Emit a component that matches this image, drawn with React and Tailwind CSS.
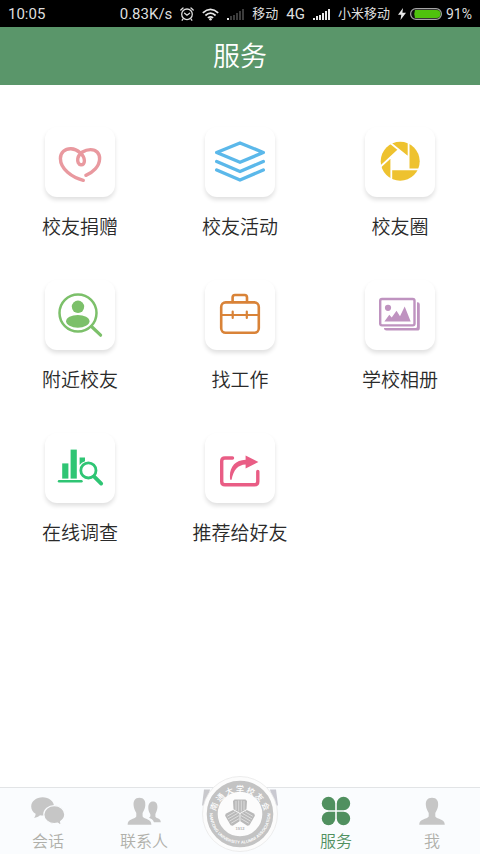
import { useState } from 'react'

// Service icons, drawn on a 70x70 tile
function HeartIcon() {
  return (
    <svg viewBox="0 0 70 70" className="w-full" fill="none" stroke="#e9999f" strokeWidth="3.4" strokeLinecap="round" aria-hidden="true">
      <path d="M38.3 53.3C27 50.5 15.4 42 15.4 31.5C15.4 25.5 20 21.6 26 21.8C32.5 22 39.4 28 39.4 33.8C39.4 36.4 38.1 37.9 36 37.8C33.4 37.6 32.3 34.8 32.8 31.5C33.8 26 40 22.6 45.5 22.6C51.5 22.6 54.8 26.5 54.6 32C54.3 39.5 48 45.5 40.9 48.3" />
    </svg>
  )
}

function LayersIcon() {
  return (
    <svg viewBox="0 0 70 70" className="w-full" fill="none" stroke="#5bb8ea" strokeWidth="3.4" strokeLinecap="round" strokeLinejoin="round" aria-hidden="true">
      <path d="M35 16L58.3 25.5L35 35.3L11.7 25.5Z" />
      <path d="M11.7 34.5L35 44.5L58.3 34.5" />
      <path d="M11.7 43L35 53L58.3 43" />
    </svg>
  )
}

function ApertureIcon() {
  return (
    <svg viewBox="0 0 70 70" className="w-full" aria-hidden="true">
      <circle cx="35.2" cy="34.3" r="19.5" fill="#eec22f" />
      <path d="M33.5 23L43.8 30V42.3H26.3V29.8Z" fill="#fff" />
      <path d="M26 16.5L44 31M43.6 13V42.5M26 42.3H57M26.3 31V56M33.5 23L14 41" fill="none" stroke="#fff" strokeWidth="1.8" />
    </svg>
  )
}

function NearbyIcon() {
  return (
    <svg viewBox="0 0 70 70" className="w-full" fill="#7cc06a" aria-hidden="true">
      <circle cx="33" cy="33" r="18.5" fill="none" stroke="#7cc06a" strokeWidth="2.5" />
      <circle cx="33" cy="26.8" r="6.2" />
      <ellipse cx="32.8" cy="41.3" rx="11.7" ry="6.4" />
      <path d="M46.5 46.5L55.6 55.2" stroke="#7cc06a" strokeWidth="3.2" strokeLinecap="round" />
    </svg>
  )
}

function BriefcaseIcon() {
  return (
    <svg viewBox="0 0 70 70" className="w-full" fill="none" stroke="#d98338" strokeWidth="2.6" strokeLinecap="round" aria-hidden="true">
      <rect x="16.2" y="22.4" width="37.6" height="30.4" rx="4.5" />
      <path d="M27.6 22V17.5Q27.6 15 30 15H39.6Q42 15 42 17.5V22" />
      <path d="M16.5 35H53.5" strokeWidth="2.2" />
      <path d="M27.7 31.5V38M41.8 31.5V38" strokeWidth="2.2" />
    </svg>
  )
}

function GalleryIcon() {
  return (
    <svg viewBox="0 0 70 70" className="w-full" fill="#bf93c0" aria-hidden="true">
      <rect x="15.2" y="19" width="34.3" height="26.4" rx="1.8" fill="none" stroke="#bf93c0" strokeWidth="2.4" />
      <path d="M52 22.3H52.5Q54.8 22.3 54.8 24.5V48Q54.8 50.6 52.3 50.6H21.5Q19 50.6 19 48.5V48H50.5Q52 48 52 46.5Z" />
      <circle cx="23" cy="27.8" r="3.1" />
      <path d="M19.4 41.6L24.3 34.8L26.7 37.5L31.5 30.7L35 36.2L39.7 26.4L45.7 41.6Z" />
    </svg>
  )
}

function SurveyIcon() {
  return (
    <svg viewBox="0 0 70 70" className="w-full" fill="#2fc574" aria-hidden="true">
      <rect x="17.2" y="30.4" width="6.2" height="15.2" />
      <rect x="25.6" y="16.6" width="6.2" height="29" />
      <path d="M34.6 24.6H40V28.2Q36.5 29.2 34.6 32Z" />
      <path d="M14 48.3H36.5" stroke="#2fc574" strokeWidth="2.4" strokeLinecap="round" />
      <circle cx="43.4" cy="37.4" r="7.6" fill="none" stroke="#2fc574" strokeWidth="2.8" />
      <path d="M49.2 43.6L56.2 50.6" stroke="#2fc574" strokeWidth="3.8" strokeLinecap="round" />
    </svg>
  )
}

function ShareIcon() {
  return (
    <svg viewBox="0 0 70 70" className="w-full" aria-hidden="true">
      <path d="M27.5 25H20Q16.7 25 16.7 28V48.5Q16.7 51.8 20 51.8H49.5Q52.8 51.8 52.8 48.5V38.5" fill="none" stroke="#e95d85" strokeWidth="3.4" strokeLinecap="round" />
      <path d="M25.2 46.8C23.5 35 29.5 27.2 40.6 26.8V22.5L53.4 29L40.6 35.6V31.6C33 32 28.5 36.8 26.6 46.8Z" fill="#e95d85" />
    </svg>
  )
}

// Tab bar icons
function ChatIcon() {
  return (
    <svg viewBox="0 0 36 30" className="h-[30px]" fill="currentColor" aria-hidden="true">
      <path d="M12.6 1.2C6.3 1.2 1.2 5.3 1.2 10.4C1.2 13.4 2.9 16.1 5.6 17.7C5.6 19.3 5 20.7 4.1 21.9C6.4 21.6 8.6 20.6 10 19.3C10.9 19.5 11.7 19.6 12.6 19.6C18.9 19.6 24 15.5 24 10.4S18.9 1.2 12.6 1.2Z" />
      <path d="M24.3 9.6C18.5 9.6 13.8 13.6 13.8 18.5S18.5 27.6 24.3 27.6C25.5 27.6 26.6 27.4 27.7 27.1C28.9 28.3 30.2 29 31.8 29.2C31 28.2 30.6 26.9 30.6 25.5C33 23.9 34.8 21.3 34.8 18.5C34.8 13.6 30.1 9.6 24.3 9.6Z" stroke="#fafcfe" strokeWidth="1.2" />
    </svg>
  )
}

function ContactsIcon() {
  return (
    <svg viewBox="0 0 36 30" className="h-[30px]" fill="currentColor" aria-hidden="true">
      <path d="M26.8 5.5C30.5 5.5 31.6 8.2 31.4 11.5C31.2 14.5 30 16.5 29.4 18V20.8C31 22.8 34.8 22.5 34.8 26.2H28C27 23.4 25 22.6 23 21.8C24.6 21 24.6 19.5 24.2 18C23 16 22.2 14 22.3 11.2C22.4 8 24 5.5 26.8 5.5Z" />
      <path d="M13.4 1.8C18 1.8 19.7 5 19.3 9.5C19.1 12.5 17.5 15 16.6 17V20.5C18.5 23.5 25.4 22.6 25.4 28.7H1.6C1.6 22.6 8.5 23.5 10.3 20.5V17C9.4 15 7.8 12.5 7.6 9.5C7.2 5 8.9 1.8 13.4 1.8Z" />
    </svg>
  )
}

function CloverIcon() {
  return (
    <svg viewBox="0 0 36 30" className="h-[30px]" fill="currentColor" aria-hidden="true">
      <path d="M10.5 0.8A6.7 6.7 0 0 1 17.2 7.5V14.2H10.5A6.7 6.7 0 0 1 10.5 0.8Z" />
      <path d="M25.5 0.8A6.7 6.7 0 0 0 18.8 7.5V14.2H25.5A6.7 6.7 0 0 0 25.5 0.8Z" />
      <path d="M10.5 29.2A6.7 6.7 0 0 0 17.2 22.5V15.8H10.5A6.7 6.7 0 0 0 10.5 29.2Z" />
      <path d="M25.5 29.2A6.7 6.7 0 0 1 18.8 22.5V15.8H25.5A6.7 6.7 0 0 1 25.5 29.2Z" />
    </svg>
  )
}

function MeIcon() {
  return (
    <svg viewBox="0 0 36 30" className="h-[30px]" fill="currentColor" aria-hidden="true">
      <path d="M18 1.8C22.8 1.8 24.5 5 24.1 9.5C23.9 12.5 22.2 15 21.3 17V20.5C23.2 23.5 30.8 22.6 30.8 28.8H5.2C5.2 22.6 12.8 23.5 14.7 20.5V17C13.8 15 12.1 12.5 11.9 9.5C11.5 5 13.2 1.8 18 1.8Z" />
    </svg>
  )
}

// One third of the emblem in the middle of the seal
function EmblemPart({ angle }) {
  return (
    <g transform={`rotate(${angle})`}>
      <path d="M-7 -12.5L-5.5 -14H5.5L7 -12.5L6.5 -4.2L0 -0.5L-6.5 -4.2Z" fill="#b9b9b9" />
      <path d="M-4 -12.5V-3.5M-1.3 -13V-2M1.3 -13V-2M4 -12.5V-3.5" stroke="#fcfcfc" strokeWidth="0.5" />
    </g>
  )
}

// English name, word by word along the lower arc
const sealWords = [
  { word: 'NANTONG', offset: 6.7 },
  { word: 'UNIVERSITY', offset: 29.1 },
  { word: 'ALUMNI', offset: 55.5 },
  { word: 'ASSOCIATION', offset: 73 },
]

function Seal() {
  return (
    <svg viewBox="0 0 76 78" className="w-[76px]" role="img" aria-label="南通大学校友会">
      <defs>
        <path id="sealTop" d="M13.5 46.5A25 25 0 1 1 62.5 46.5" />
        <path id="sealBottom" d="M8.5 31A30.3 30.3 0 1 0 67.5 31" />
      </defs>
      <path d="M2 14H8L4 30H0Z" fill="#c9c9cd" />
      <path d="M74 14H68L72 30H76Z" fill="#c9c9d1" />
      <circle cx="38" cy="38.5" r="37.5" fill="#fcfcfc" stroke="#e9e9e9" strokeWidth="0.8" />
      <circle cx="38" cy="38.5" r="27.8" fill="none" stroke="#c3c3c3" strokeWidth="11" />
      <text fill="#fff" fontSize="8" fontWeight="500" fontFamily="'Noto Sans CJK SC', sans-serif" textAnchor="middle">
        <textPath href="#sealTop" startOffset="50%">南 通 大 学 校 友 会</textPath>
      </text>
      {sealWords.map(({ word, offset }) => (
        <text key={word} fill="#fff" fontSize="4.2" fontWeight="700" fontFamily="'Liberation Sans', sans-serif">
          <textPath href="#sealBottom" startOffset={offset}>{word}</textPath>
        </text>
      ))}
      <g transform="translate(38 38)">
        <EmblemPart angle={0} />
        <EmblemPart angle={120} />
        <EmblemPart angle={240} />
      </g>
      <text x="38" y="54" fill="#b5b5b5" fontSize="4" fontWeight="700" fontFamily="'Liberation Sans', sans-serif" textAnchor="middle">1912</text>
    </svg>
  )
}

// Signal strength, `level` of the six bars are lit
function Signal({ level }) {
  return (
    <svg viewBox="0 0 17 12" className="h-3" aria-hidden="true">
      {[2, 4, 5, 7, 9, 11].map((h, i) => (
        <rect key={i} x={i * 3} y={12 - h} width="2" height={h} fill={i < level ? '#e8e8e8' : '#3c3c3c'} />
      ))}
    </svg>
  )
}

function StatusBar() {
  return (
    <div className="flex h-[27px] items-center gap-2 bg-black px-2 pt-px text-[15px] text-[#dedede]">
      <span className="mr-auto">10:05</span>
      <span>0.83K/s</span>
      <svg viewBox="0 0 14 14" className="h-[14px]" fill="none" stroke="#dedede" strokeWidth="1.3" strokeLinecap="round" aria-hidden="true">
        <circle cx="7" cy="7.3" r="5.3" />
        <path d="M4.6 6.2L7 8.2L9.6 6.2M0.8 3L3 1M13.2 3L11 1M3 12L2.2 13.2M11 12L11.8 13.2" />
      </svg>
      <svg viewBox="0 0 17 13" className="h-[13px]" fill="none" stroke="#e8e8e8" strokeWidth="1.7" aria-hidden="true">
        <path d="M0.8 4.8Q8.5 -2 16.2 4.8M3.4 7.5Q8.5 2.8 13.6 7.5M5.9 10Q8.5 7.6 11.1 10" />
        <circle cx="8.5" cy="11.3" r="1.3" fill="#e8e8e8" stroke="none" />
      </svg>
      <Signal level={1} />
      <span className="text-[13px]">移动</span>
      <span>4G</span>
      <Signal level={6} />
      <span className="text-[13px]">小米移动</span>
      <div className="flex items-center gap-1">
        <svg viewBox="0 0 8 12" className="h-3" fill="#e8e8e8" aria-hidden="true">
          <path d="M5 0L0 6.8H3.3L2.5 12L8 4.8H4.4Z" />
        </svg>
        <svg viewBox="0 0 32 12" className="h-3" aria-hidden="true">
          <rect x="0.6" y="0.6" width="30.8" height="10.8" rx="5.4" fill="#111" stroke="#a5a5a5" strokeWidth="1.2" />
          <path d="M5 2H26.5A4 4 0 0 1 26.5 10H5Q3.5 6 5 2Z" fill="#4fc20d" />
        </svg>
        <span className="text-sm">91%</span>
      </div>
    </div>
  )
}

const services = [
  { label: '校友捐赠', Icon: HeartIcon },
  { label: '校友活动', Icon: LayersIcon },
  { label: '校友圈', Icon: ApertureIcon },
  { label: '附近校友', Icon: NearbyIcon },
  { label: '找工作', Icon: BriefcaseIcon },
  { label: '学校相册', Icon: GalleryIcon },
  { label: '在线调查', Icon: SurveyIcon },
  { label: '推荐给好友', Icon: ShareIcon },
]

const tabs = [
  { label: '会话', Icon: ChatIcon },
  { label: '联系人', Icon: ContactsIcon },
  { label: '', Icon: Seal },
  { label: '服务', Icon: CloverIcon },
  { label: '我', Icon: MeIcon },
]

function App() {
  const [active, setActive] = useState('服务')

  return (
    <div className="flex min-h-screen flex-col bg-white font-[Roboto,'Noto_Sans_CJK_SC',sans-serif]">
      <StatusBar />

      {/* Header */}
      <header className="flex h-[58px] items-center justify-center bg-[#5a966a] pt-0.5">
        <h1 className="text-[27px] font-[350] text-white">服务</h1>
      </header>

      {/* Services */}
      <main className="grid flex-1 grid-cols-3 content-start gap-y-[38px] pt-[42px] pb-8">
        {services.map(({ label, Icon }) => (
          <button key={label} className="flex flex-col items-center gap-[17px]">
            <span className="w-[70px] rounded-xl bg-white shadow-[0_3px_4px_rgba(0,0,0,0.12)]">
              <Icon />
            </span>
            <span className="text-[19px] leading-7 font-[350] text-[#2a2a2a]">{label}</span>
          </button>
        ))}
      </main>

      {/* Tab bar */}
      <nav className="grid grid-cols-5 border-t border-[#e2e4e6] bg-[#fafcfe]">
        {tabs.map(({ label, Icon }) =>
          label ? (
            <button
              key={label}
              onClick={() => setActive(label)}
              className={`flex flex-col items-center gap-[5px] pt-2 pb-px ${active === label ? 'text-[#50905f]' : 'text-[#c6c6c6]'}`}
            >
              <Icon />
              <span className={`text-base leading-[22px] font-[350] ${active === label ? '' : 'text-[#b0b0aa]'}`}>{label}</span>
            </button>
          ) : (
            <button key="seal" className="-mt-[13px] flex justify-center">
              <Icon />
            </button>
          )
        )}
      </nav>
    </div>
  )
}

export default App
